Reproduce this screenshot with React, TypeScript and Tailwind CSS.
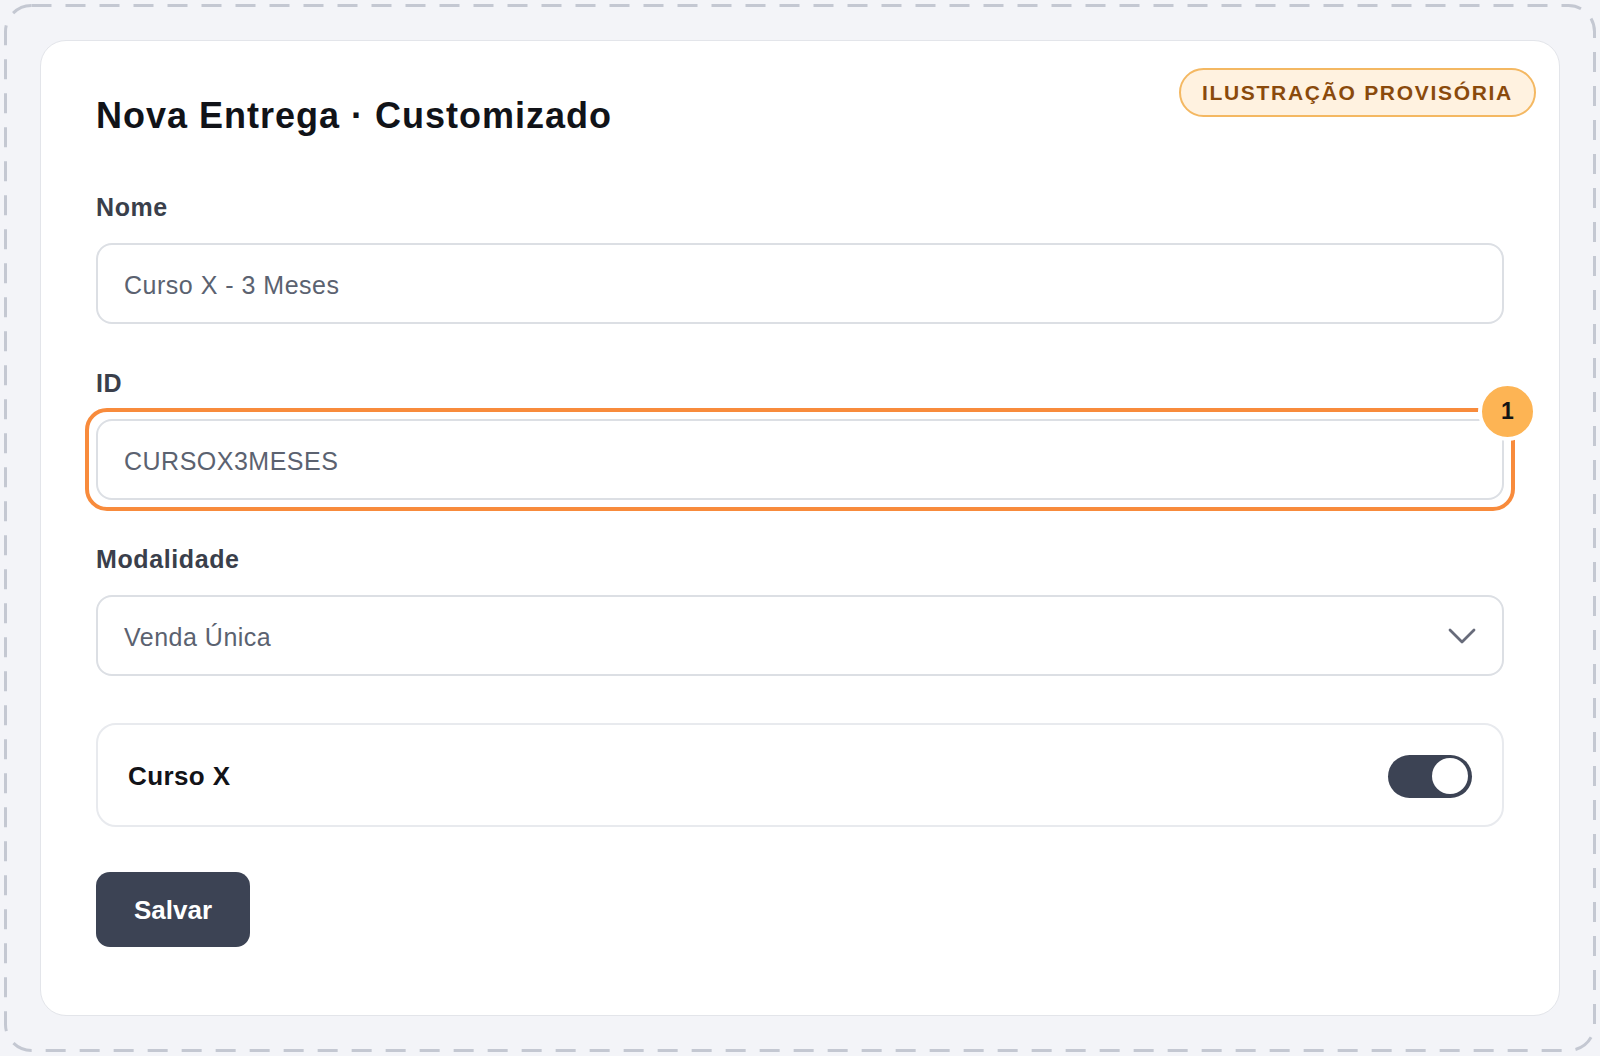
import React from 'react';

const font = "font-['Liberation_Sans',Helvetica,Arial,sans-serif]";

function Field({ label, value, children }: { label: string; value: string; children?: React.ReactNode }) {
  return (
    <div className="mb-[44px]">
      <div className="mb-[21px] text-[25px] leading-[30px] font-bold tracking-[0.6px] text-[#3a3f4b]">{label}</div>
      <div className="relative">
        {children}
        <div className="relative flex h-[81px] items-center rounded-[16px] border-2 border-[#dcdfe4] bg-white pl-[26px] pr-[28px] pt-[4px]">
          <span className="flex-1 text-[25px] tracking-[0.5px] text-[#5b6270]">{value}</span>
        </div>
      </div>
    </div>
  );
}

export default function App() {
  return (
    <div className={`h-screen w-full bg-[#f3f4f8] p-[4px] ${font}`}>
      <div className="relative h-full p-[36px]">
        <svg className="pointer-events-none absolute inset-0" width="1592" height="1048" viewBox="0 0 1592 1048">
          <rect x="1.5" y="1.5" width="1589" height="1045" rx="26" fill="none" stroke="#c4c8d2" strokeWidth="3" strokeDasharray="20 14" />
        </svg>

        <div className="relative flex h-full flex-col rounded-[26px] border border-[#e3e5ea] bg-white px-[55px] pt-[53px]">
          <span className="absolute right-[23px] top-[27px] flex h-[49px] items-center rounded-full border-2 border-[#f4b862] bg-[#fff2e0] px-[21px] text-[21px] font-bold tracking-[1.7px] text-[#8a4a0c]">
            ILUSTRAÇÃO PROVISÓRIA
          </span>

          <h1 className="mb-[54px] text-[36px] leading-[44px] font-bold tracking-[1px] text-[#111318]">
            Nova Entrega · Customizado
          </h1>

          <Field label="Nome" value="Curso X - 3 Meses" />

          <Field label="ID" value="CURSOX3MESES">
            <div className="absolute -inset-[11px] rounded-[22px] border-4 border-[#f88b3c]" />
            <div className="absolute -right-[33px] -top-[37px] z-10 flex h-[59px] w-[59px] items-center justify-center rounded-full border-4 border-white bg-[#fdb454] text-[23px] font-bold text-[#141414]">
              1
            </div>
          </Field>

          <div className="mb-[47px]">
            <div className="mb-[21px] text-[25px] leading-[30px] font-bold tracking-[0.6px] text-[#3a3f4b]">Modalidade</div>
            <div className="flex h-[81px] items-center rounded-[16px] border-2 border-[#dcdfe4] bg-white pl-[26px] pr-[26px] pt-[4px]">
              <span className="flex-1 text-[25px] tracking-[0.5px] text-[#5b6270]">Venda Única</span>
              <svg width="28" height="16" viewBox="0 0 28 16" className="-mt-[4px]">
                <path d="M2 2 L14 14 L26 2" fill="none" stroke="#676b7a" strokeWidth="2.8" strokeLinecap="round" strokeLinejoin="round" />
              </svg>
            </div>
          </div>

          <div className="mb-[45px] flex h-[104px] items-center rounded-[20px] border-2 border-[#e8eaee] px-[30px] pt-[2px]">
            <span className="flex-1 text-[26px] font-bold tracking-[0.4px] text-[#121318]">Curso X</span>
            <div className="flex h-[43px] w-[84px] items-center justify-end rounded-full bg-[#3c4354] pr-[4px]">
              <div className="h-[36px] w-[36px] rounded-full bg-white" />
            </div>
          </div>

          <div>
            <button className="flex h-[75px] items-center rounded-[14px] bg-[#3c4354] px-[38px] pt-[2px] text-[26px] font-bold text-white">
              Salvar
            </button>
          </div>
        </div>
      </div>
    </div>
  );
}
